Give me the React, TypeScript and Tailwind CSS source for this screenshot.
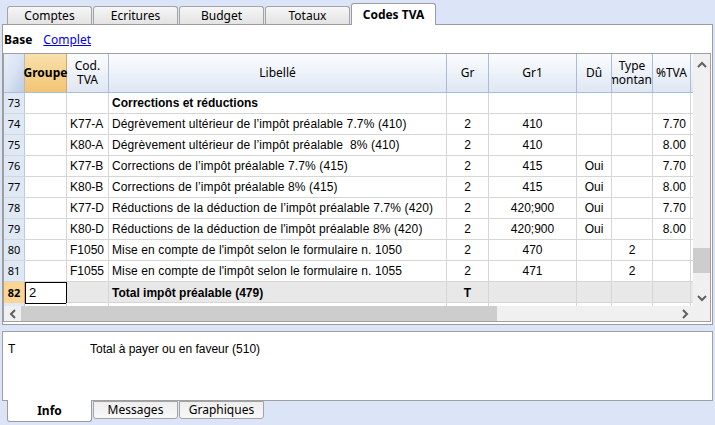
import React from 'react'

type Row = {
  n: string
  code?: string
  lib: string
  bold?: boolean
  gr?: string
  gr1?: string
  du?: string
  type?: string
  tva?: string
}

const rows: Row[] = [
  { n: '73', lib: 'Corrections et réductions', bold: true },
  { n: '74', code: 'K77-A', lib: 'Dégrèvement ultérieur de l’impôt préalable 7.7% (410)', gr: '2', gr1: '410', tva: '7.70' },
  { n: '75', code: 'K80-A', lib: 'Dégrèvement ultérieur de l’impôt préalable  8% (410)', gr: '2', gr1: '410', tva: '8.00' },
  { n: '76', code: 'K77-B', lib: 'Corrections de l’impôt préalable 7.7% (415)', gr: '2', gr1: '415', du: 'Oui', tva: '7.70' },
  { n: '77', code: 'K80-B', lib: 'Corrections de l’impôt préalable 8% (415)', gr: '2', gr1: '415', du: 'Oui', tva: '8.00' },
  { n: '78', code: 'K77-D', lib: 'Réductions de la déduction de l’impôt préalable 7.7% (420)', gr: '2', gr1: '420;900', du: 'Oui', tva: '7.70' },
  { n: '79', code: 'K80-D', lib: "Réductions de la déduction de l'impôt préalable 8% (420)", gr: '2', gr1: '420;900', du: 'Oui', tva: '8.00' },
  { n: '80', code: 'F1050', lib: "Mise en compte de l'impôt selon le formulaire n. 1050", gr: '2', gr1: '470', type: '2' },
  { n: '81', code: 'F1055', lib: "Mise en compte de l'impôt selon le formulaire n. 1055", gr: '2', gr1: '471', type: '2' },
]

const cols = 'grid grid-cols-[21px_42px_42px_338px_42px_88px_35px_41px_38px_2px]'
const cell = 'border-r border-[#d6d6d6] h-full flex items-center overflow-hidden whitespace-pre'
const head = 'border-r border-[#aabdd8] h-full flex flex-col items-center justify-center text-center leading-[14px] overflow-hidden'

function Tab({ label, active, w = 85 }: { label: string; active?: boolean; w?: number }) {
  return active ? (
    <div
      style={{ width: w }}
      className="h-[22px] -mb-[1px] relative z-10 bg-white border border-b-0 border-[#9c9c9c] rounded-t-[3px] flex items-center justify-center font-bold text-black"
    >
      {label}
    </div>
  ) : (
    <div
      style={{ width: w }}
      className="h-[18px] bg-gradient-to-b from-[#f6f6f6] to-[#e3e3e3] border border-b-0 border-[#a4a4a4] rounded-t-[3px] flex items-center justify-center text-black"
    >
      {label}
    </div>
  )
}

function Chevron({ dir }: { dir: 'up' | 'down' | 'left' | 'right' }) {
  const pts = {
    up: '1,6 5,2 9,6',
    down: '1,2 5,6 9,2',
    left: '6,1 2,5 6,9',
    right: '2,1 6,5 2,9',
  }[dir]
  const vertical = dir === 'up' || dir === 'down'
  return (
    <svg width={vertical ? 10 : 8} height={vertical ? 8 : 10} viewBox={vertical ? '0 0 10 8' : '0 0 8 10'}>
      <polyline points={pts} fill="none" stroke="#606060" strokeWidth="2" />
    </svg>
  )
}

export default function App() {
  return (
    <div className="w-[715px] h-[425px] bg-[#dbe5f7] overflow-hidden text-[12px] text-black font-['Liberation_Sans',Arial,sans-serif]">
      {/* top tabs */}
      <div className="h-[24px] flex items-end gap-[1px] pl-[7px] font-['Noto_Sans',sans-serif] text-[12px]">
        <Tab label="Comptes" />
        <Tab label="Ecritures" />
        <Tab label="Budget" />
        <Tab label="Totaux" />
        <Tab label="Codes TVA" active />
      </div>

      {/* main panel */}
      <div className="ml-[2px] w-[711px] h-[301px] border border-[#9c9c9c] bg-white flex flex-col">
        <div className="h-[28px] flex items-center gap-[11px] pl-[1px] pt-[1px] font-['Noto_Sans',sans-serif] text-[12px]">
          <span className="font-bold">Base</span>
          <span className="text-[#0000ee] underline">Complet</span>
        </div>

        <div className="w-[708px] h-[269px] border border-[#a0a0a0] flex flex-col">
          <div className="flex h-[252px]">
            {/* table */}
            <div className="w-[689px] h-full overflow-hidden">
              {/* header */}
              <div className={`${cols} h-[39px] border-b border-[#aabdd8] bg-gradient-to-b from-[#fbfcfe] to-[#dfe7f3] font-['Noto_Sans',sans-serif] text-[12px]`}>
                <div className="h-full border-r border-[#aabdd8] bg-gradient-to-br from-[#e9eff8] via-[#d9e3f2] to-[#b9cbe6]" />
                <div className="h-full border-r border-[#f0a43a] bg-gradient-to-b from-[#f9e0ab] to-[#f2c574] flex items-center justify-center font-bold">
                  Groupe
                </div>
                <div className={head}>
                  <span>Cod.</span>
                  <span>TVA</span>
                </div>
                <div className={head}>Libellé</div>
                <div className={head}>Gr</div>
                <div className={head}>Gr1</div>
                <div className={head}>Dû</div>
                <div className={head}>
                  <span>Type</span>
                  <span>montant</span>
                </div>
                <div className={head}>%TVA</div>
                <div />
              </div>

              {rows.map((r) => (
                <div key={r.n} className={`${cols} h-[21px] border-b border-[#d6d6d6]`}>
                  <div className="h-full bg-[#dfe8f5] border-r border-[#b9cae3] flex items-center justify-center text-[11px] font-['Noto_Sans',sans-serif]">
                    {r.n}
                  </div>
                  <div className={cell} />
                  <div className={`${cell} pl-[3px]`}>{r.code}</div>
                  <div className={`${cell} pl-[3px] ${r.bold ? 'font-bold' : 'tracking-[0.12px]'}`}>{r.lib}</div>
                  <div className={`${cell} justify-center`}>{r.gr}</div>
                  <div className={`${cell} justify-center`}>{r.gr1}</div>
                  <div className={`${cell} justify-center`}>{r.du}</div>
                  <div className={`${cell} justify-center`}>{r.type}</div>
                  <div className={`${cell} justify-end pr-[4px]`}>{r.tva}</div>
                  <div />
                </div>
              ))}

              {/* total row (selected) */}
              <div className={`${cols} h-[21px] border-b border-[#d6d6d6] bg-[#e8e8e8]`}>
                <div className="h-full bg-[#fbd594] border-r border-[#f0a43a] flex items-center justify-center text-[11px] font-bold font-['Noto_Sans',sans-serif]">
                  82
                </div>
                <div className="h-full bg-white border border-black flex items-center pl-[3px] text-[13px]">2</div>
                <div className={cell} />
                <div className={`${cell} pl-[3px] font-bold`}>Total impôt préalable (479)</div>
                <div className={`${cell} justify-center font-bold`}>T</div>
                <div className={cell} />
                <div className={cell} />
                <div className={cell} />
                <div className={cell} />
                <div />
              </div>

              {/* partial row */}
              <div className={`${cols} h-[4px]`}>
                <div className="h-full bg-[#dfe8f5] border-r border-[#b9cae3]" />
                <div className={cell} />
                <div className={cell} />
                <div className={cell} />
                <div className={cell} />
                <div className={cell} />
                <div className={cell} />
                <div className={cell} />
                <div className={cell} />
                <div />
              </div>
            </div>

            {/* vertical scrollbar */}
            <div className="w-[17px] h-full bg-[#f0f0f0] flex flex-col items-center">
              <div className="h-[17px] mt-[2px] flex items-center justify-center">
                <Chevron dir="up" />
              </div>
              <div className="flex-1 w-full relative">
                <div className="absolute left-0 right-0 top-[175px] h-[25px] bg-[#cdcdcd]" />
              </div>
              <div className="h-[17px] flex items-center justify-center">
                <Chevron dir="down" />
              </div>
            </div>
          </div>

          {/* horizontal scrollbar */}
          <div className="flex h-[15px]">
            <div className="w-[689px] h-full bg-[#f0f0f0] flex items-center">
              <div className="w-[17px] flex justify-center">
                <Chevron dir="left" />
              </div>
              <div className="w-[476px] h-full bg-[#cdcdcd]" />
              <div className="flex-1" />
              <div className="w-[17px] flex justify-center">
                <Chevron dir="right" />
              </div>
            </div>
            <div className="w-[17px] h-full bg-[#f0f0f0]" />
          </div>
        </div>
      </div>

      {/* info panel */}
      <div className="mt-[6px] ml-[2px] w-[711px] h-[70px] border border-[#a0a0a0] bg-white pt-[8px] flex">
        <span className="w-[87px] pl-[5px]">T</span>
        <span>Total à payer ou en faveur (510)</span>
      </div>

      {/* bottom tabs */}
      <div className="flex items-start gap-[1px] pl-[7px] -mt-[1px] font-['Noto_Sans',sans-serif] text-[12px]">
        <div className="w-[85px] h-[22px] bg-white border border-t-0 border-[#9c9c9c] rounded-b-[3px] flex items-center justify-center font-bold relative z-10">
          Info
        </div>
        <div className="w-[85px] h-[18px] mt-[1px] bg-gradient-to-b from-[#eeeeee] to-[#f8f8f8] border border-[#a4a4a4] rounded-b-[3px] flex items-center justify-center">
          Messages
        </div>
        <div className="w-[85px] h-[18px] mt-[1px] bg-gradient-to-b from-[#eeeeee] to-[#f8f8f8] border border-[#a4a4a4] rounded-b-[3px] flex items-center justify-center">
          Graphiques
        </div>
      </div>
    </div>
  )
}
